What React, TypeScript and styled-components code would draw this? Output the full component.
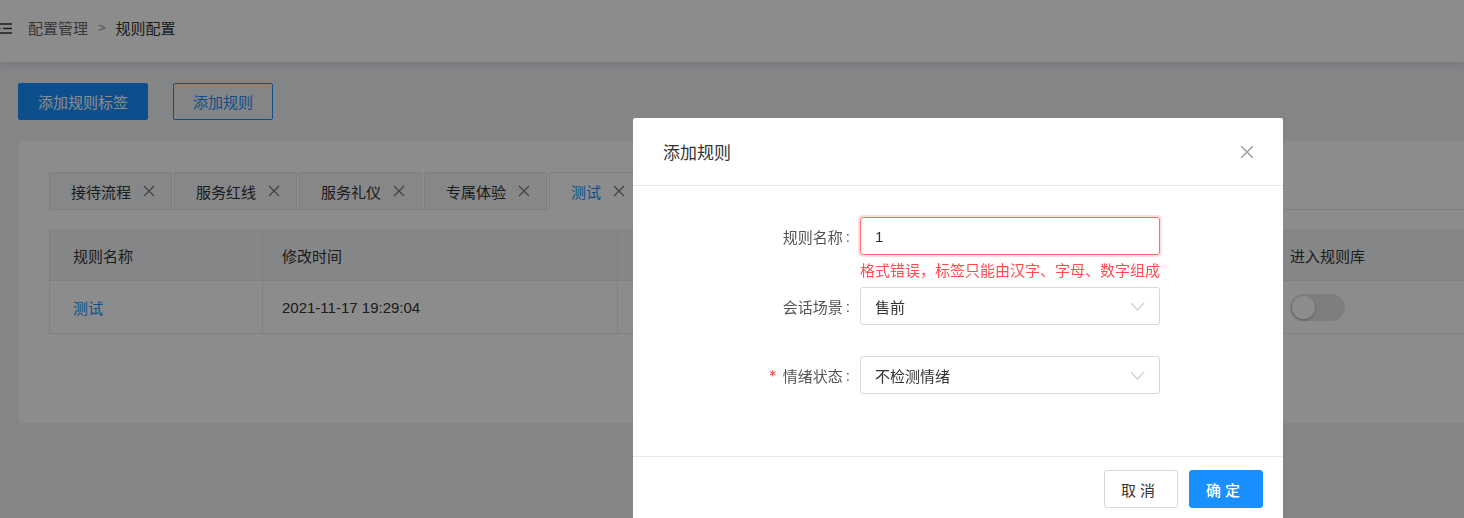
import React from 'react';
import styled, { createGlobalStyle } from 'styled-components';

const GlobalStyle = createGlobalStyle`
  html, body {
    margin: 0;
    padding: 0;
    background: #f0f2f5;
    overflow: hidden;
    font-family: "Liberation Sans", "Noto Sans CJK SC", sans-serif;
    font-size: 15px;
    color: #333;
  }
  * {
    box-sizing: border-box;
  }
`;

const Page = styled.div`
  width: 1464px;
  height: 518px;
  overflow: hidden;
`;

const Header = styled.header`
  height: 62px;
  background: #fff;
  box-shadow: 0 2px 6px rgba(0, 21, 41, 0.12);
  display: flex;
  align-items: center;
  gap: 16px;
  position: relative;
  z-index: 1;
`;

const FoldIcon = styled.svg`
  margin-left: -2px;
  margin-top: -5px;
`;

const Crumbs = styled.div`
  display: flex;
  align-items: center;
  gap: 10px;
  margin-top: -8px;
`;

const Crumb = styled.span<{ $current?: boolean }>`
  color: ${({ $current }) => ($current ? '#333' : '#666')};
`;

const Separator = styled.span`
  color: #999;
  font-size: 13px;
`;

const Toolbar = styled.div`
  display: flex;
  gap: 25px;
  padding: 21px 0 0 18px;
`;

const Button = styled.button<{ $primary?: boolean; $width: number }>`
  height: 37px;
  width: ${({ $width }) => $width}px;
  border-radius: 2px;
  font-family: inherit;
  font-size: 15px;
  cursor: pointer;
  border: 1px solid #1890ff;
  background: ${({ $primary }) => ($primary ? '#1890ff' : 'transparent')};
  color: ${({ $primary }) => ($primary ? '#fff' : '#1890ff')};
`;

const Card = styled.section`
  margin: 21px -60px 0 19px;
  height: 282px;
  background: #fff;
  padding: 31px 0 0 30px;
`;

const TabBar = styled.div`
  display: flex;
  gap: 2px;
  border-bottom: 1px solid #e8e8e8;
  height: 38px;
`;

const Tab = styled.div<{ $active?: boolean }>`
  height: 38px;
  display: flex;
  align-items: center;
  gap: 12px;
  padding: 0 16px 0 21px;
  border: 1px solid #e8e8e8;
  border-bottom: ${({ $active }) => ($active ? '1px solid #fff' : '1px solid #e8e8e8')};
  background: ${({ $active }) => ($active ? '#fff' : '#f5f6f8')};
  color: ${({ $active }) => ($active ? '#1890ff' : '#333')};
  border-radius: 2px 2px 0 0;
`;

const Table = styled.div`
  margin-top: 20px;
  border: 1px solid #e8eaec;
  border-right: none;
`;

const Row = styled.div<{ $head?: boolean }>`
  display: grid;
  grid-template-columns: 212px 355px 383px 270px 1fr;
  height: ${({ $head }) => ($head ? '49px' : '53px')};
  background: ${({ $head }) => ($head ? '#f2f4f7' : '#fff')};
  border-top: ${({ $head }) => ($head ? 'none' : '1px solid #e8eaec')};
`;

const Cell = styled.div<{ $first?: boolean }>`
  display: flex;
  align-items: center;
  padding-left: ${({ $first }) => ($first ? '23px' : '19px')};
  border-left: ${({ $first }) => ($first ? 'none' : '1px solid #e8eaec')};
  color: #333;
`;

const Link = styled.a`
  color: #1890ff;
  text-decoration: none;
`;

const Switch = styled.span`
  width: 55px;
  height: 27px;
  border-radius: 14px;
  background: #e6e6e6;
  position: relative;

  &::after {
    content: '';
    position: absolute;
    left: 2px;
    top: 2px;
    width: 23px;
    height: 23px;
    border-radius: 50%;
    background: #fff;
    box-shadow: 0 1px 3px rgba(0, 0, 0, 0.3);
  }
`;

const Mask = styled.div`
  position: fixed;
  inset: 0;
  background: rgba(0, 0, 0, 0.45);
  z-index: 10;
`;

const Modal = styled.div`
  position: fixed;
  top: 118px;
  left: 633px;
  width: 650px;
  background: #fff;
  border-radius: 2px;
  z-index: 11;
`;

const ModalHeader = styled.div`
  height: 68px;
  padding: 0 29px 0 30px;
  border-bottom: 1px solid #e8e8e8;
  display: flex;
  align-items: center;
  justify-content: space-between;
`;

const ModalTitle = styled.span`
  font-size: 17px;
  color: #333;
`;

const ModalBody = styled.div`
  padding: 31px 0 31px;
`;

const FormItem = styled.div<{ $hasError?: boolean }>`
  display: grid;
  grid-template-columns: 227px 300px;
  margin-bottom: ${({ $hasError }) => ($hasError ? '6px' : '31px')};
`;

const Label = styled.label`
  height: 38px;
  display: flex;
  align-items: center;
  justify-content: flex-end;
  padding-right: 10px;
  color: #555;
`;

const Colon = styled.span`
  margin-left: 3px;
`;

const Star = styled.span`
  color: #f5222d;
  margin-right: 6px;
  font-family: "DejaVu Sans Mono", monospace;
  font-size: 14px;
`;

const Control = styled.div<{ $error?: boolean }>`
  height: 38px;
  display: flex;
  align-items: center;
  justify-content: space-between;
  padding: 0 14px;
  border: 1px solid ${({ $error }) => ($error ? '#ff6e6e' : '#d9d9d9')};
  border-radius: 3px;
  box-shadow: ${({ $error }) => ($error ? '0 0 0 2px rgba(255, 77, 79, 0.18)' : 'none')};
  color: #333;
`;

const ErrorText = styled.div`
  grid-column: 2;
  margin-top: 6px;
  line-height: 20px;
  color: #ff4d4f;
  white-space: nowrap;
`;

const ModalFooter = styled.div`
  border-top: 1px solid #e8e8e8;
  padding: 13px 20px 14px;
  display: flex;
  justify-content: flex-end;
  gap: 11px;
`;

const FooterButton = styled.button<{ $primary?: boolean }>`
  width: 74px;
  height: 38px;
  border-radius: 3px;
  font-family: inherit;
  font-size: 15px;
  letter-spacing: 4px;
  padding-left: 4px;
  cursor: pointer;
  border: 1px solid ${({ $primary }) => ($primary ? '#1890ff' : '#d9d9d9')};
  background: ${({ $primary }) => ($primary ? '#1890ff' : '#fff')};
  color: ${({ $primary }) => ($primary ? '#fff' : '#333')};
  font-weight: ${({ $primary }) => ($primary ? 500 : 400)};
`;

const Cross = ({ size, color }: { size: number; color: string }) => (
  <svg width={size} height={size} viewBox="0 0 12 12">
    <path d="M1 1 L11 11 M11 1 L1 11" stroke={color} strokeWidth="1.2" fill="none" />
  </svg>
);

const Chevron = () => (
  <svg width="15" height="9" viewBox="0 0 15 9">
    <path d="M1 1 L7.5 8 L14 1" stroke="#bfbfbf" strokeWidth="1.1" fill="none" />
  </svg>
);

const tabs = ['接待流程', '服务红线', '服务礼仪', '专属体验', '测试'];

export default function App() {
  return (
    <Page>
      <GlobalStyle />
      <Header>
        <FoldIcon width="14" height="11" viewBox="0 0 14 11">
          <path d="M0 1 H14 M5 5.5 H14 M0 10 H14" stroke="#333" strokeWidth="1.6" />
          <path d="M0 3.5 L3 5.5 L0 7.5 Z" fill="#333" />
        </FoldIcon>
        <Crumbs>
          <Crumb>配置管理</Crumb>
          <Separator>&gt;</Separator>
          <Crumb $current>规则配置</Crumb>
        </Crumbs>
      </Header>

      <Toolbar>
        <Button $primary $width={130}>添加规则标签</Button>
        <Button $width={100}>添加规则</Button>
      </Toolbar>

      <Card>
        <TabBar>
          {tabs.map((t, i) => (
            <Tab key={t} $active={i === tabs.length - 1}>
              {t}
              <Cross size={12} color="#777" />
            </Tab>
          ))}
        </TabBar>
        <Table>
          <Row $head>
            <Cell $first>规则名称</Cell>
            <Cell>修改时间</Cell>
            <Cell />
            <Cell />
            <Cell>进入规则库</Cell>
          </Row>
          <Row>
            <Cell $first>
              <Link>测试</Link>
            </Cell>
            <Cell>2021-11-17 19:29:04</Cell>
            <Cell />
            <Cell />
            <Cell>
              <Switch />
            </Cell>
          </Row>
        </Table>
      </Card>

      <Mask />
      <Modal>
        <ModalHeader>
          <ModalTitle>添加规则</ModalTitle>
          <Cross size={14} color="#999" />
        </ModalHeader>
        <ModalBody>
          <FormItem $hasError>
            <Label>
              规则名称<Colon>:</Colon>
            </Label>
            <Control $error>1</Control>
            <ErrorText>格式错误，标签只能由汉字、字母、数字组成</ErrorText>
          </FormItem>
          <FormItem>
            <Label>
              会话场景<Colon>:</Colon>
            </Label>
            <Control>
              售前
              <Chevron />
            </Control>
          </FormItem>
          <FormItem>
            <Label>
              <Star>*</Star>情绪状态<Colon>:</Colon>
            </Label>
            <Control>
              不检测情绪
              <Chevron />
            </Control>
          </FormItem>
        </ModalBody>
        <ModalFooter>
          <FooterButton>取消</FooterButton>
          <FooterButton $primary>确定</FooterButton>
        </ModalFooter>
      </Modal>
    </Page>
  );
}
